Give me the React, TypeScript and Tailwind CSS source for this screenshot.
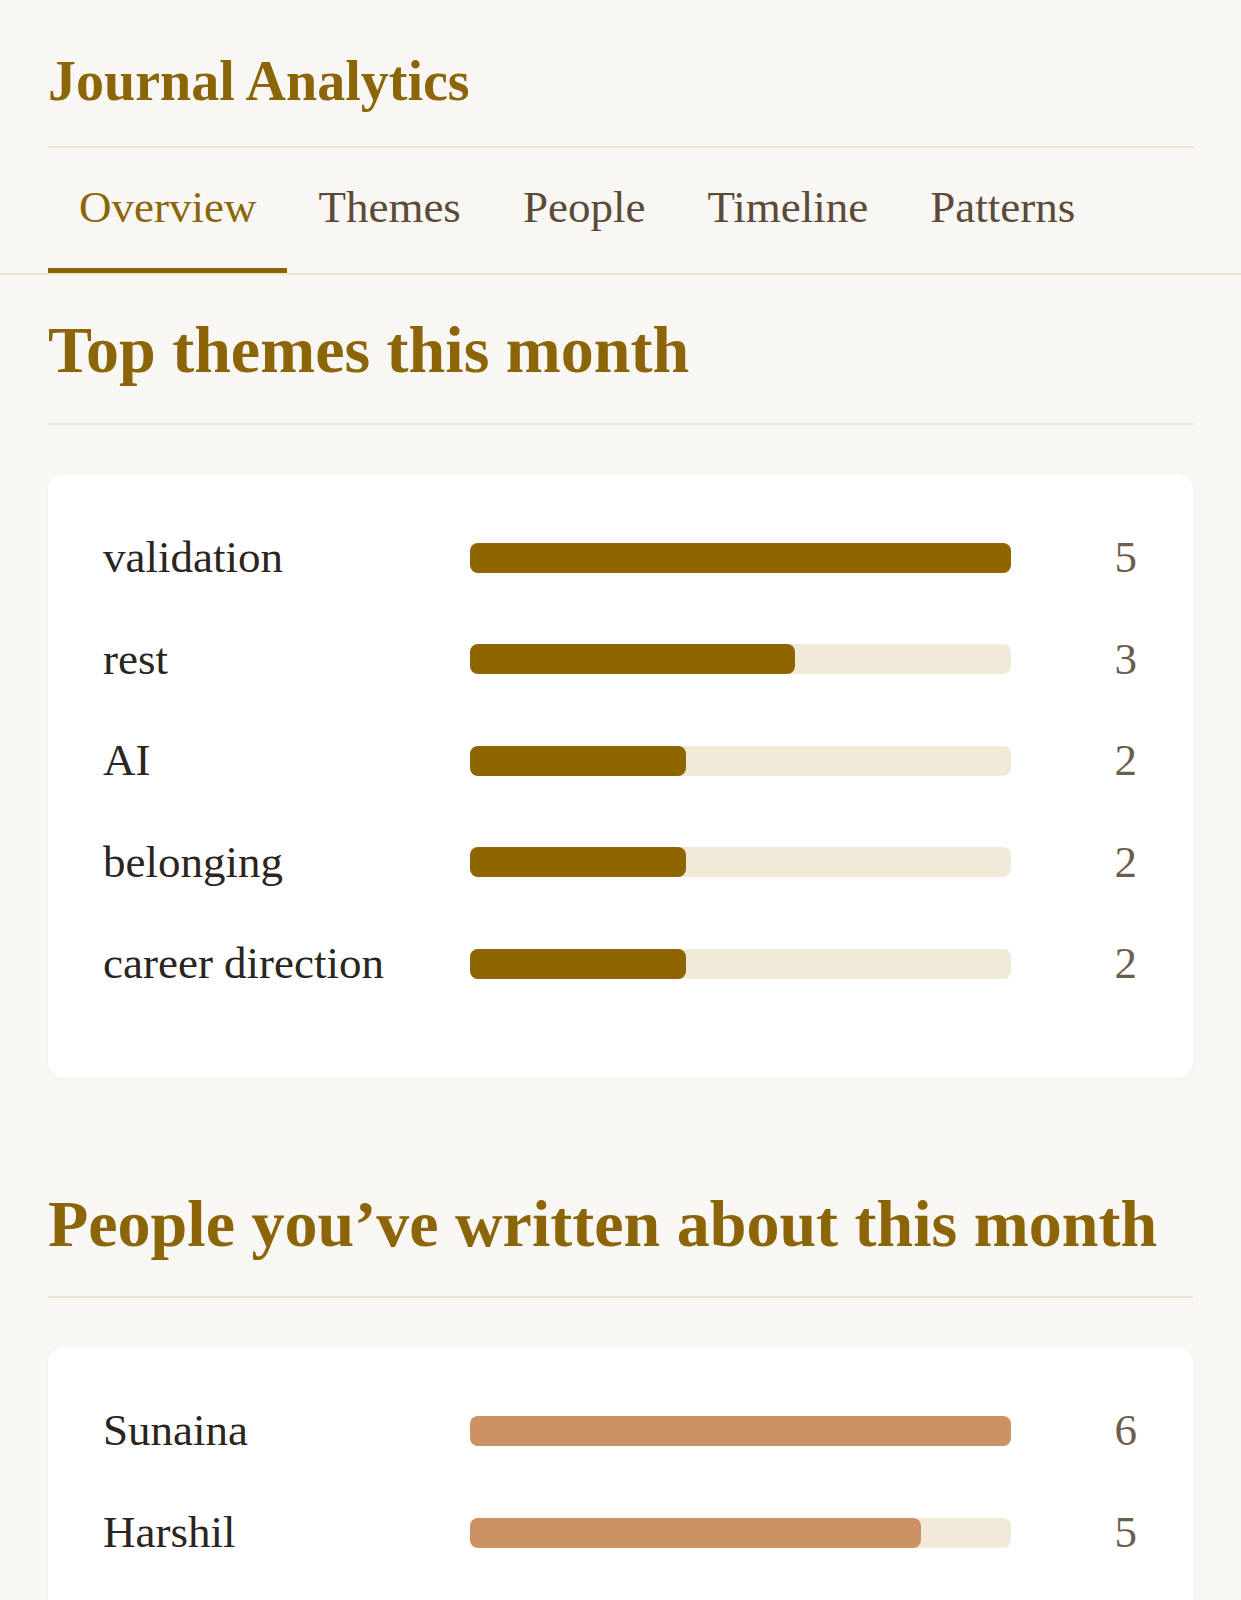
import React from "react";

type Row = { label: string; value: number };

const themes: Row[] = [
  { label: "validation", value: 5 },
  { label: "rest", value: 3 },
  { label: "AI", value: 2 },
  { label: "belonging", value: 2 },
  { label: "career direction", value: 2 },
];

const people: Row[] = [
  { label: "Sunaina", value: 6 },
  { label: "Harshil", value: 5 },
];

const tabs = ["Overview", "Themes", "People", "Timeline", "Patterns"];

function BarCard({ rows, fill }: { rows: Row[]; fill: string }) {
  const max = Math.max(...rows.map((r) => r.value));
  return (
    <div className="mt-[49px] rounded-2xl bg-white pt-[50px] pb-[80px] pl-[55px] pr-[56px] shadow-[0_1px_3px_rgba(120,100,60,0.06)]">
      <div className="flex flex-col gap-[34px]">
        {rows.map((r) => (
          <div
            key={r.label}
            className="grid grid-cols-[367px_541px_1fr] items-center text-[45px] leading-[1.5]"
          >
            <span className="text-[#2a2520]">{r.label}</span>
            <div className="h-[30px] w-full rounded-[8px] bg-[#f2ead8]">
              <div
                className={`h-[30px] rounded-[8px] ${fill}`}
                style={{ width: `${(r.value / max) * 100}%` }}
              />
            </div>
            <span className="text-right text-[#6e5d4b]">{r.value}</span>
          </div>
        ))}
      </div>
    </div>
  );
}

function SectionHeading({ children }: { children: React.ReactNode }) {
  return (
    <h2 className="border-b-2 border-[#eee4d2] pb-[34px] text-[66px] font-bold leading-[1.18] text-[#8c6508]">
      {children}
    </h2>
  );
}

export default function App() {
  return (
    <div
      className="min-h-[1600px] w-full bg-[#f9f7f3]"
      style={{ fontFamily: '"Liberation Serif", "Times New Roman", serif' }}
    >
      <header className="px-[48px] pt-[48px]">
        <h1 className="border-b-2 border-[#eee4d2] pb-[32px] text-[56px] font-bold leading-[1.18] text-[#8c6508]">
          Journal Analytics
        </h1>
      </header>

      <nav className="border-b-2 border-[#eee4d2]">
        <div className="flex px-[48px] pt-[26px]">
          {tabs.map((t, i) => (
            <div
              key={t}
              className={`border-b-[5px] px-[31px] pb-[28px] text-[45px] leading-[1.47] ${
                i === 0
                  ? "border-[#8c6508] text-[#8c6508]"
                  : "border-transparent text-[#5b4a38]"
              }`}
            >
              {t}
            </div>
          ))}
        </div>
      </nav>

      <main className="px-[48px]">
        <section className="mt-[36px]">
          <SectionHeading>Top themes this month</SectionHeading>
          <BarCard rows={themes} fill="bg-[#8f6500]" />
        </section>

        <section className="mt-[107px]">
          <SectionHeading>People you’ve written about this month</SectionHeading>
          <BarCard rows={people} fill="bg-[#cd9264]" />
        </section>
      </main>
    </div>
  );
}
